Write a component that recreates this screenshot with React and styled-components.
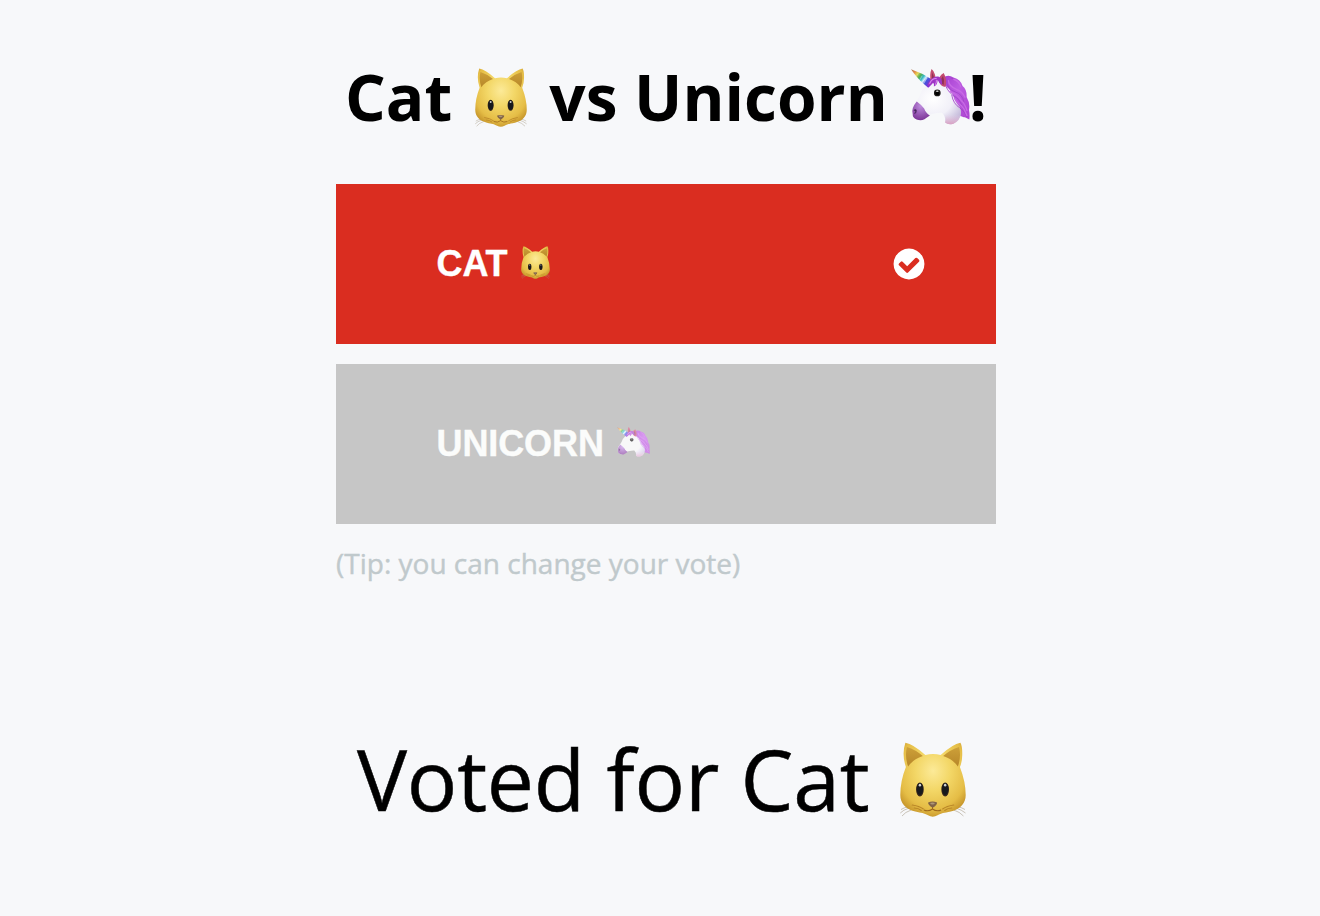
import React, { useId, useState } from 'react';
import styled, { createGlobalStyle } from 'styled-components';

const GlobalStyle = createGlobalStyle`
  body {
    margin: 0;
    background: #f7f8fa;
    font-family: 'Open Sans', sans-serif;
    color: #000;
  }
`;

const Page = styled.main`
  box-sizing: border-box;
  width: 660px;
  min-height: 916px;
  margin-left: 336px;
  padding-top: 53px;
`;

const Title = styled.h1`
  display: flex;
  align-items: baseline;
  height: 88px;
  margin: 0 0 43px;
  padding-left: 9px;
  font-size: 64px;
  line-height: 88px;
  font-weight: 700;
  white-space: pre;
`;

const Choices = styled.div`
  display: grid;
  gap: 20px;
`;

const Choice = styled.button`
  display: flex;
  align-items: center;
  justify-content: space-between;
  height: 160px;
  padding: 0 69px 0 100.5px;
  border: 0;
  background: ${(p) => (p.$chosen ? '#da2d20' : '#c6c6c6')};
  color: ${(p) => (p.$chosen ? '#fff' : '#fbfcfb')};
  font: 700 36px/42px 'Liberation Sans', Arial, sans-serif;
  letter-spacing: -0.1px;
  -webkit-text-stroke: 0.4px currentColor;
`;

const Label = styled.span`
  display: flex;
  align-items: baseline;
  height: 42px;
  white-space: pre;
`;

const Tip = styled.p`
  margin: 19px 0 0;
  font-size: 28px;
  line-height: 40px;
  color: #c0c9cc;
  -webkit-text-stroke: 0.4px currentColor;
`;

const Result = styled.p`
  display: flex;
  align-items: baseline;
  height: 120px;
  margin: 136px 0 0;
  padding-left: 21px;
  font-size: 84px;
  line-height: 120px;
  letter-spacing: -0.23px;
  white-space: pre;
  -webkit-text-stroke: 0.5px currentColor;
`;

const Glyph = styled.svg`
  flex: none;
  width: ${(p) => p.$w}px;
  height: ${(p) => p.$h}px;
  margin: 0 ${(p) => p.$right || 0}px 0 ${(p) => p.$left || 0}px;
  transform: translateY(${(p) => p.$drop}px);
  filter: ${(p) => (p.$faded ? 'contrast(0.55) brightness(1.36)' : 'none')};
  opacity: ${(p) => (p.$faded ? 0.88 : 1)};
`;

const CheckMark = styled.svg`
  width: 36px;
  height: 36px;
  fill: #fff;
`;

function Cat(props) {
  const id = useId();
  return (
    <Glyph viewBox="16 12 65 75" preserveAspectRatio="none" role="img" aria-label="Cat" {...props}>
      <defs>
        <radialGradient id={`${id}f`} cx="50%" cy="38%" r="66%">
          <stop offset="0" stopColor="#fcea98" />
          <stop offset=".4" stopColor="#f3d767" />
          <stop offset=".78" stopColor="#e5bd46" />
          <stop offset="1" stopColor="#c39128" />
        </radialGradient>
        <linearGradient id={`${id}e`} x1="0" y1="0" x2="0" y2="1">
          <stop offset="0" stopColor="#cda039" />
          <stop offset="1" stopColor="#b78729" />
        </linearGradient>
      </defs>
      <g fill="none" stroke="#aa9f8b" strokeWidth=".6">
        <path d="M25 78Q19 80 16.3 83M27 80Q21 82 18 86M25 76.5Q20 77.5 17 79.5M71 78Q77 80 80.5 83M69 80Q75 82 78.5 86M72 76.5Q77 77.5 80 79.5" />
      </g>
      <path
        fill={`url(#${id}f)`}
        d="M21.3 12.7Q29 14 41 25Q48.5 23 56 25Q68 14 75.5 12.7Q77.5 16 77.3 25Q77.2 32 75 37Q80.7 52 80.7 65C80.7 73 76 79 66 81.5C59 83 57 83 53 85.3Q48.3 88 43.6 85.3C39.5 83 37.5 83 31 81.5C21 79 16.3 73 16.3 65Q16.3 51 21.8 37Q17.5 24 21.3 12.7Z"
      />
      <path fill={`url(#${id}e)`} d="M22.8 17Q31 19.5 38.5 26Q29 29 24 36.5Q20.5 27 22.8 17ZM74.2 17Q66 19.5 58.5 26Q68 29 73 36.5Q76.5 27 74.2 17Z" />
      <path fill="#3a281b" d="M31.8 59.5a3.8 7 0 1 0 7.6 0a3.8 7 0 1 0-7.6 0M56.7 59.5a3.8 7 0 1 0 7.6 0a3.8 7 0 1 0-7.6 0" />
      <path fill="#17191d" d="M32.5 59a3.1 6 0 1 0 6.2 0a3.1 6 0 1 0-6.2 0M57.4 59a3.1 6 0 1 0 6.2 0a3.1 6 0 1 0-6.2 0" />
      <ellipse cx="35.6" cy="55.2" rx="1.2" ry="1.4" fill="#fff" opacity=".8" />
      <ellipse cx="60.5" cy="55.2" rx="1.2" ry="1.4" fill="#fff" opacity=".8" />
      <path fill="none" stroke="#b98527" strokeWidth="1" strokeLinecap="round" d="M28 75Q35 76 39 79M30 78Q34 78 37 80.5M69 75Q62 76 58 79M67 78Q63 78 60 80.5" />
      <path fill="none" stroke="#9d691b" strokeWidth="1" d="M48 76V79Q44 82 39.5 80M48 79Q52 82 56.5 80" />
      <path fill="#806347" d="M43.7 72.5Q48 70.7 52.5 72.5Q52.8 75 48.2 77.8Q43.4 75 43.7 72.5Z" />
      <path fill="#ad9677" d="M45.5 73Q48 72 50.5 73Q49.5 74.5 48 74.5Q46.5 74.5 45.5 73Z" />
    </Glyph>
  );
}

function Unicorn(props) {
  const id = useId();
  return (
    <Glyph viewBox="47 44 175 164" preserveAspectRatio="none" role="img" aria-label="Unicorn" {...props}>
      <defs>
        <linearGradient id={`${id}h`} gradientUnits="userSpaceOnUse" x1="48" y1="47" x2="105" y2="91">
          <stop offset="0" stopColor="#a9744f" />
          <stop offset=".15" stopColor="#e2864a" />
          <stop offset=".28" stopColor="#e8d44f" />
          <stop offset=".43" stopColor="#4fae58" />
          <stop offset=".56" stopColor="#35b9c9" />
          <stop offset=".66" stopColor="#d9eefb" />
          <stop offset=".76" stopColor="#4257db" />
          <stop offset="1" stopColor="#8b27d4" />
        </linearGradient>
        <radialGradient id={`${id}w`} cx="42%" cy="40%" r="67%">
          <stop offset="0" stopColor="#fff" />
          <stop offset=".6" stopColor="#f1f0f8" />
          <stop offset="1" stopColor="#c5bbdb" />
        </radialGradient>
        <linearGradient id={`${id}m`} x1="0" y1="0" x2="1" y2="1">
          <stop offset="0" stopColor="#a43bce" />
          <stop offset=".45" stopColor="#bd5de2" />
          <stop offset="1" stopColor="#ab42cf" />
        </linearGradient>
        <radialGradient id={`${id}n`} cx="48%" cy="25%" r="75%">
          <stop offset="0" stopColor="#bd8bdd" />
          <stop offset="1" stopColor="#7d3698" />
        </radialGradient>
        <linearGradient id={`${id}p`} x1="0" y1="0" x2="0" y2="1">
          <stop offset=".5" stopColor="#eed1e5" stopOpacity="0" />
          <stop offset="1" stopColor="#d9a0c2" />
        </linearGradient>
      </defs>
      <path fill={`url(#${id}m)`} d="M143 69Q157 58 173 69Q194 74 200 94Q213 104 212 126Q223 145 219 163Q222 179 220 192L207 185Q196 187 187 176Q174 158 165 137Q146 111 139 82Z" />
      <path fill={`url(#${id}w)`} d="M104 88Q124 76 142 88Q163 101 172 121Q176 139 192 155Q202 180 183 198Q166 212 148 201Q151 184 139 172Q126 171 113 175Q101 177 93 184Q83 195 69 193Q53 190 52 175Q47 158 61 143Q73 126 78 110Q88 93 104 88Z" />
      <path fill={`url(#${id}p)`} d="M145 170Q166 174 177 148Q194 155 194 175Q192 196 173 204Q157 209 148 201Q153 186 145 170Z" />
      <path fill={`url(#${id}n)`} d="M64 139Q76 147 86 160Q91 174 103 180Q91 188 87 191Q77 196 64 192Q51 187 52 174Q48 158 64 139Z" />
      <path fill="#47245c" d="M54 165Q62 159 64 166Q64 174 57 176Q55 172 61 170Q57 165 54 165Z" />
      <path fill={`url(#${id}h)`} d="M47 45Q78 55 109 75Q113 88 98 99Q67 75 47 45Z" />
      <path stroke="#fff" strokeWidth="1.8" opacity=".5" d="M63 65L69 57M73 76L80 64M85 87L94 70" />
      <path fill="#c34c70" d="M106 84Q101 59 108 44Q114 48 118 60Q122 72 120 84ZM131 83Q127 65 144 56Q149 64 151 77Q152 86 150 95Q138 99 131 83Z" />
      <path fill="#8f3155" d="M110 82Q108 65 110 54Q117 66 116 82ZM136 84Q136 71 142 64Q147 76 144 91Z" />
      <path fill="#9d37c6" d="M98 86Q110 63 128 66Q141 70 139 91Q129 84 126 76Q126 91 115 95Q116 87 113 84Q106 94 96 93Z" />
      <path fill="none" stroke="#db83ee" strokeWidth="3" d="M102 87Q110 70 123 72M119 90Q124 82 122 76" />
      <g fill="none" strokeLinecap="round">
        <path stroke="#a143c8" strokeWidth="2.5" d="M153 76Q151 102 178 111Q199 117 204 140M151 96Q160 116 182 128Q197 140 202 164M168 121Q172 146 192 158Q206 168 213 184M166 70Q187 76 196 94" />
        <path stroke="#c76ae4" strokeWidth="4" d="M158 78Q159 94 182 104Q200 110 207 127M163 110Q184 118 194 134Q208 147 213 166M177 131Q184 145 196 151Q206 161 213 180M174 74Q190 80 195 96" />
      </g>
      <circle cx="125" cy="114" r="10" fill="#1b1918" />
      <circle cx="125" cy="115" r="6" fill="#000" />
      <ellipse cx="125" cy="109" rx="4" ry="2.2" fill="#ccc" />
    </Glyph>
  );
}

function Check() {
  return (
    <CheckMark viewBox="0 0 1792 1792" aria-hidden="true">
      <path d="M1412 734q0-28-18-46l-91-90q-19-19-45-19t-45 19l-408 407-226-226q-19-19-45-19t-45 19l-91 90q-18 18-18 46 0 27 18 45l362 362q19 19 45 19 27 0 46-19l543-543q18-18 18-45zm252 162q0 209-103 385.5t-279.5 279.5-385.5 103-385.5-103-279.5-279.5-103-385.5 103-385.5 279.5-279.5 385.5-103 385.5 103 279.5 279.5 103 385.5z" />
    </CheckMark>
  );
}

export default function App() {
  const [vote, setVote] = useState('cat');
  const voted = vote === 'cat';
  return (
    <>
      <GlobalStyle />
      <Page>
        <Title>
          <span>Cat</span>
          <Cat $w={52} $h={59} $drop={6} $left={23} $right={22} />
          <span>vs Unicorn</span>
          <Unicorn $w={59} $h={56} $drop={4} $left={23} $right={-1} />
          <span>!</span>
        </Title>
        <Choices>
          <Choice $chosen={voted} onClick={() => setVote('cat')}>
            <Label>
              <span>CAT</span>
              <Cat $w={29} $h={33} $drop={3} $left={13} />
            </Label>
            {voted && <Check />}
          </Choice>
          <Choice $chosen={!voted} onClick={() => setVote('unicorn')}>
            <Label>
              <span>UNICORN</span>
              <Unicorn $w={33} $h={30} $drop={1} $left={13} $faded={voted} />
            </Label>
            {!voted && <Check />}
          </Choice>
        </Choices>
        <Tip>(Tip: you can change your vote)</Tip>
        <Result>
          <span>Voted for {voted ? 'Cat' : 'Unicorn'}</span>
          {voted ? <Cat $w={66} $h={75} $drop={6} $left={31} /> : <Unicorn $w={75} $h={70} $drop={6} $left={31} />}
        </Result>
      </Page>
    </>
  );
}
